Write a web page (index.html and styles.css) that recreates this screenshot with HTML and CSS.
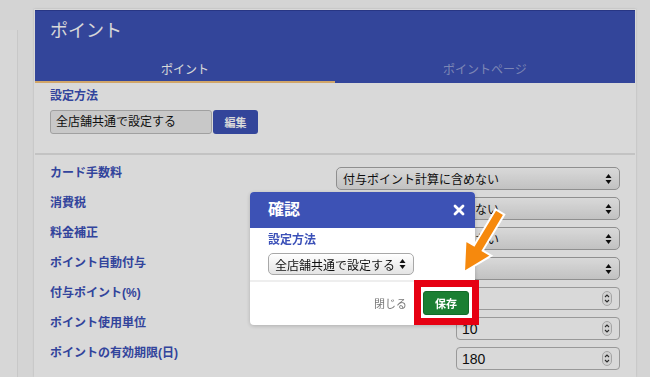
FILE: index.html
```html
<!DOCTYPE html>
<html lang="ja">
<head>
    <meta charset="UTF-8">
    <meta name="viewport" content="width=device-width, initial-scale=1.0">
    <title>ポイント</title>
    <link rel="stylesheet" href="styles.css">
</head>
<body>
    <div class="page">
        <aside class="sidebar"></aside>
        <main class="card">
            <header class="card-head">
                <h1 class="card-title">ポイント</h1>
                <nav class="tabs">
                    <a class="tab active">ポイント</a>
                    <a class="tab">ポイントページ</a>
                </nav>
            </header>

            <section class="method">
                <div class="field-label">設定方法</div>
                <div class="method-row">
                    <div class="method-value">全店舗共通で設定する</div>
                    <button class="btn-edit">編集</button>
                </div>
            </section>

            <section class="settings">
                <div class="row">
                    <div class="row-label">カード手数料</div>
                    <div class="select"><span>付与ポイント計算に含めない</span>
                        <svg class="caret" width="7" height="12" viewBox="0 0 7 12"><path d="M3.5 1L6.5 5H0.5Z M3.5 11L0.5 7H6.5Z"/></svg>
                    </div>
                </div>
                <div class="row">
                    <div class="row-label">消費税</div>
                    <div class="select"><span>付与ポイント計算に含めない</span>
                        <svg class="caret" width="7" height="12" viewBox="0 0 7 12"><path d="M3.5 1L6.5 5H0.5Z M3.5 11L0.5 7H6.5Z"/></svg>
                    </div>
                </div>
                <div class="row">
                    <div class="row-label">料金補正</div>
                    <div class="select"><span>付与ポイント計算に含めない</span>
                        <svg class="caret" width="7" height="12" viewBox="0 0 7 12"><path d="M3.5 1L6.5 5H0.5Z M3.5 11L0.5 7H6.5Z"/></svg>
                    </div>
                </div>
                <div class="row">
                    <div class="row-label">ポイント自動付与</div>
                    <div class="select"><span></span>
                        <svg class="caret" width="7" height="12" viewBox="0 0 7 12"><path d="M3.5 1L6.5 5H0.5Z M3.5 11L0.5 7H6.5Z"/></svg>
                    </div>
                </div>
                <div class="row">
                    <div class="row-label">付与ポイント(%)</div>
                    <div class="number"><span>1</span>
                        <svg class="spin" width="10" height="15" viewBox="0 0 10 15"><rect x="0.5" y="0.5" width="9" height="14" rx="4.5" fill="#f6f6f6" stroke="#c2c2c2"/><path d="M3 6L5 4L7 6 M3 9L5 11L7 9" fill="none" stroke="#333" stroke-width="1.1"/></svg>
                    </div>
                </div>
                <div class="row">
                    <div class="row-label">ポイント使用単位</div>
                    <div class="number"><span>10</span>
                        <svg class="spin" width="10" height="15" viewBox="0 0 10 15"><rect x="0.5" y="0.5" width="9" height="14" rx="4.5" fill="#f6f6f6" stroke="#c2c2c2"/><path d="M3 6L5 4L7 6 M3 9L5 11L7 9" fill="none" stroke="#333" stroke-width="1.1"/></svg>
                    </div>
                </div>
                <div class="row">
                    <div class="row-label">ポイントの有効期限(日)</div>
                    <div class="number"><span>180</span>
                        <svg class="spin" width="10" height="15" viewBox="0 0 10 15"><rect x="0.5" y="0.5" width="9" height="14" rx="4.5" fill="#f6f6f6" stroke="#c2c2c2"/><path d="M3 6L5 4L7 6 M3 9L5 11L7 9" fill="none" stroke="#333" stroke-width="1.1"/></svg>
                    </div>
                </div>
            </section>
        </main>
    </div>

    <div class="overlay">
        <div class="modal">
            <div class="modal-head">
                <h2 class="modal-title">確認</h2>
                <svg class="close" width="12" height="12" viewBox="0 0 12 12"><path d="M2 2L10 10M10 2L2 10" stroke="#fff" stroke-width="2.8" stroke-linecap="round"/></svg>
            </div>
            <div class="modal-body">
                <div class="field-label">設定方法</div>
                <div class="select select-small"><span>全店舗共通で設定する</span>
                    <svg class="caret" width="7" height="12" viewBox="0 0 7 12"><path d="M3.5 1L6.5 5H0.5Z M3.5 11L0.5 7H6.5Z"/></svg>
                </div>
            </div>
            <div class="modal-foot">
                <span class="btn-close">閉じる</span>
                <button class="btn-save">保存</button>
            </div>
        </div>
        <div class="highlight"></div>
        <svg class="pointer" width="650" height="377" viewBox="0 0 650 377">
            <polygon points="464,272 465.5,240.3 474.1,245.4 495.7,209.4 504.3,214.6 482.7,250.6 491.3,255.7" fill="#f6890d" stroke="#fff" stroke-width="2" stroke-linejoin="miter"/>
        </svg>
    </div>
</body>
</html>
```

FILE: styles.css
```css
body {
    margin: 0;
    height: 377px;
    overflow: hidden;
    background-color: #f9f9f9;
    font-family: "Liberation Sans", "Noto Sans CJK JP", sans-serif;
    color: #111;
}
.page {
    display: flex;
    align-items: flex-start;
}
.sidebar {
    width: 17px;
    height: 347px;
    margin-top: 30px;
    background-color: #fdfdfd;
    border-right: 1px solid #ececec;
}
.card {
    width: 600px;
    height: 366px;
    margin: 9px 0 0 16px;
    background-color: #fff;
    border: 1px solid #fff;
    box-shadow: 0 0 2px rgba(0, 0, 0, 0.15);
}
.card-head {
    background-color: #3d52b5;
    border-top: 1px solid #2f409c;
}
.card-title {
    margin: 0;
    padding: 9px 15px 0;
    height: 38px;
    font-size: 18px;
    line-height: 22px;
    font-weight: normal;
    color: #fff;
}
.tabs {
    display: flex;
}
.tab {
    flex: 1;
    text-align: center;
    font-size: 12px;
    line-height: 14px;
    padding: 5px 0 4px;
    border-bottom: 2px solid transparent;
    color: rgba(255, 255, 255, 0.45);
}
.tab.active {
    color: #fff;
    border-bottom-color: #f6c47c;
}
.field-label {
    font-size: 12px;
    line-height: 16px;
    font-weight: bold;
    color: #3b50b8;
}
.method {
    padding: 5px 15px 19px;
    border-bottom: 2px solid #e6e6e6;
}
.method .field-label {
    margin-bottom: 6px;
}
.method-row {
    display: flex;
    gap: 1px;
}
.method-value {
    width: 150px;
    height: 22px;
    padding: 0 5px;
    line-height: 22px;
    font-size: 12px;
    background-color: #ececec;
    border: 1px solid #bdbdbd;
    border-radius: 3px;
}
.btn-edit {
    width: 45px;
    height: 24px;
    padding: 0;
    border: none;
    border-radius: 3px;
    background-color: #3d52b5;
    color: #fff;
    font-family: inherit;
    font-size: 11px;
    font-weight: bold;
}
.settings {
    padding: 10px 15px 0;
}
.row {
    display: grid;
    grid-template-columns: 286px 1fr;
    height: 30px;
}
.row-label {
    font-size: 12px;
    line-height: 16px;
    font-weight: bold;
    color: #3b50b8;
}
.select {
    display: flex;
    align-items: center;
    height: 21px;
    margin-top: 2px;
    padding: 0 7px 0 6px;
    border: 1px solid #a8a8a8;
    border-radius: 5px;
    background: linear-gradient(#ffffff, #e4e4e4);
    font-size: 12px;
    box-shadow: inset 0 1px 0 #fff;
}
.select span {
    flex: 1;
}
.caret {
    fill: #111;
}
.number {
    display: flex;
    align-items: center;
    justify-self: end;
    width: 150px;
    height: 21px;
    margin-top: 2px;
    padding: 0 7px 0 5px;
    border: 1px solid #b4b4b4;
    border-radius: 4px;
    background-color: #fff;
    font-size: 14px;
}
.number span {
    flex: 1;
}
.overlay {
    position: fixed;
    top: 0;
    left: 0;
    right: 0;
    bottom: 0;
    background-color: rgba(0, 0, 0, 0.15);
}
.modal {
    position: absolute;
    left: 250px;
    top: 192px;
    width: 225px;
    height: 133px;
    background-color: #fff;
    border-radius: 4px;
    overflow: hidden;
    box-shadow: 0 1px 4px rgba(0, 0, 0, 0.2);
}
.modal-head {
    display: flex;
    align-items: center;
    justify-content: space-between;
    height: 36px;
    padding: 0 10px 0 18px;
    background-color: #3d52b5;
}
.modal-title {
    margin: 0;
    font-size: 16px;
    line-height: 20px;
    color: #fff;
}
.modal-body {
    padding: 4px 0 5px 18px;
    border-bottom: 2px solid #eeeeee;
}
.modal-body .field-label {
    margin-bottom: 5px;
}
.select-small {
    width: 131px;
    height: 20px;
    margin-top: 0;
    padding: 0 7px 0 6px;
}
.modal-foot {
    display: flex;
    align-items: center;
    justify-content: flex-end;
    gap: 16px;
    padding: 9px 6px 0;
}
.btn-close {
    font-size: 11px;
    color: #777;
}
.btn-save {
    width: 46px;
    height: 24px;
    padding: 0;
    border: 1px solid #136a29;
    border-radius: 3px;
    background-color: #1b7f33;
    color: #fff;
    font-family: inherit;
    font-size: 11px;
    font-weight: bold;
}
.highlight {
    position: absolute;
    left: 414px;
    top: 280px;
    width: 51px;
    height: 31px;
    border: 7px solid #e60012;
}
.pointer {
    position: absolute;
    top: 0;
    left: 0;
}
```
